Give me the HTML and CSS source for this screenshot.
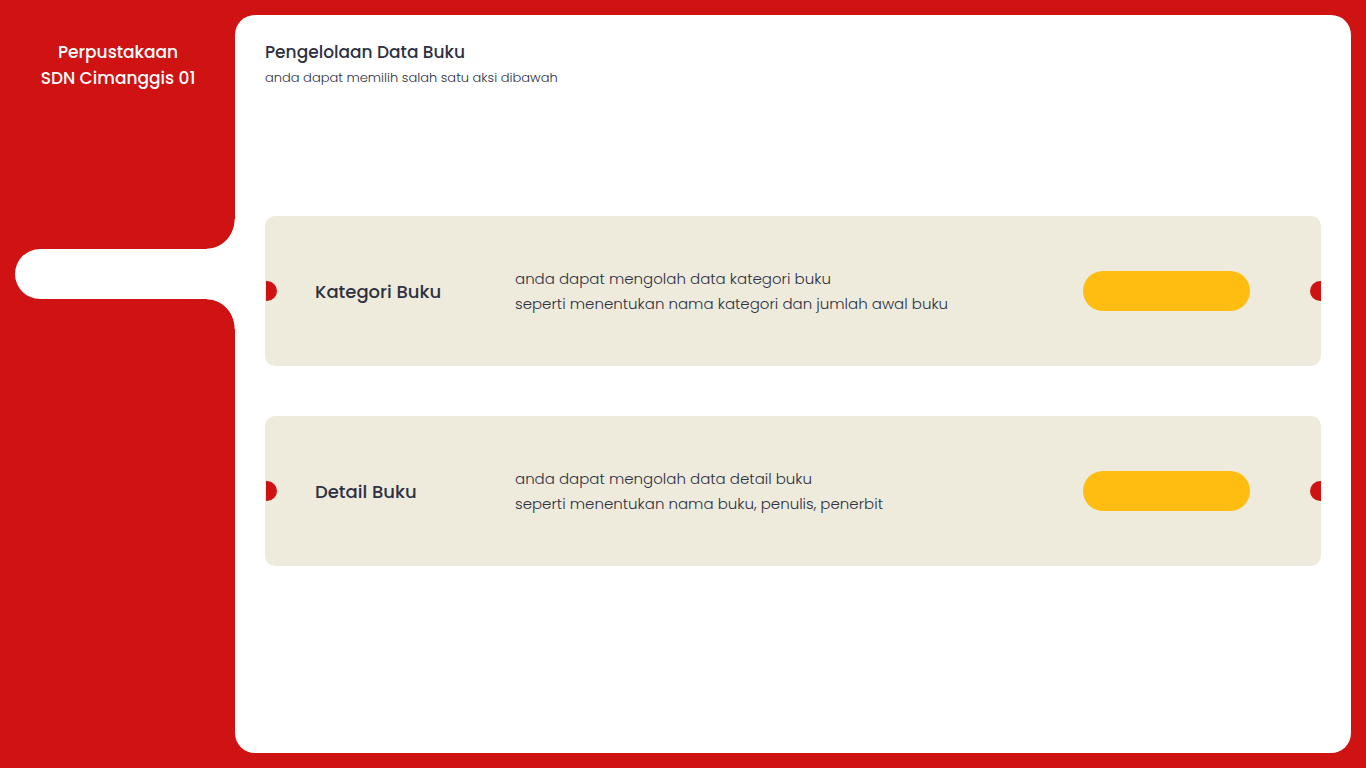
FILE: index.html
```html
<!DOCTYPE html>
<html lang="id">
<head>
<meta charset="utf-8">
<meta name="viewport" content="width=device-width, initial-scale=1">
<title>Perpustakaan SDN Cimanggis 01</title>
<link rel="stylesheet" href="styles.css">
</head>
<body>
<div class="layout">
  <aside class="sidebar">
    <p class="brand">Perpustakaan<br>SDN Cimanggis 01</p>
    <nav class="menu" aria-label="Menu">
      <a class="menu-item" href="#" aria-label="Buku" aria-current="page"></a>
    </nav>
  </aside>
  <main class="content">
    <header>
      <h1 class="title">Pengelolaan Data Buku</h1>
      <p class="subtitle">anda dapat memilih salah satu aksi dibawah</p>
    </header>
    <div class="cards">
      <section class="card">
        <h2 class="card-title">Kategori Buku</h2>
        <p class="card-text">anda dapat mengolah data kategori buku<br>seperti menentukan nama kategori dan jumlah awal buku</p>
        <button class="card-button" type="button" aria-label="Kategori Buku"></button>
      </section>
      <section class="card">
        <h2 class="card-title">Detail Buku</h2>
        <p class="card-text">anda dapat mengolah data detail buku<br>seperti menentukan nama buku, penulis, penerbit</p>
        <button class="card-button" type="button" aria-label="Detail Buku"></button>
      </section>
    </div>
  </main>
</div>
</body>
</html>
```
FILE: styles.css
```css
* {
  box-sizing: border-box;
  margin: 0;
  padding: 0;
}

body {
  background: #cf1212;
  color: #2d3142;
  font-family: Poppins, Inter, "Open Sans", sans-serif;
}

.layout {
  display: flex;
  min-height: 100vh;
  padding: 15px;
}

.sidebar {
  flex: 0 0 220px;
}

.brand {
  padding: 24px 14px 0 0;
  color: #fff;
  font-size: 17px;
  font-weight: 500;
  line-height: 26px;
  text-align: center;
}

.menu {
  padding-top: 158px;
}

.menu-item {
  position: relative;
  display: block;
  height: 50px;
  background: #fff;
  border-radius: 25px 0 0 25px;
}

.menu-item::before,
.menu-item::after {
  position: absolute;
  right: 0;
  width: 28px;
  height: 30px;
  content: "";
}

.menu-item::before {
  bottom: 100%;
  background: radial-gradient(28px 30px at 0 0, transparent 97%, #fff 100%);
}

.menu-item::after {
  top: 100%;
  background: radial-gradient(28px 30px at 0 100%, transparent 97%, #fff 100%);
}

.content {
  display: flex;
  flex: 1;
  flex-direction: column;
  padding: 24px 30px;
  background: #fff;
  border-radius: 20px;
}

.title {
  font-size: 17px;
  font-weight: 500;
  line-height: 26px;
}

.subtitle {
  font-size: 13px;
  font-weight: 300;
  line-height: 26px;
}

.cards {
  display: grid;
  gap: 50px;
  padding-top: 125px;
}

.card {
  position: relative;
  display: grid;
  grid-template-columns: 200px 1fr 167px;
  align-items: center;
  min-height: 150px;
  padding: 0 71px 0 50px;
  background: #eeebdc;
  border-radius: 10px;
}

.card::before,
.card::after {
  position: absolute;
  top: calc(50% - 10px);
  width: 11px;
  height: 20px;
  background: #cf1212;
  content: "";
}

.card::before {
  left: 1px;
  border-radius: 0 10px 10px 0;
}

.card::after {
  right: 0;
  border-radius: 10px 0 0 10px;
}

.card-title {
  font-size: 18px;
  font-weight: 500;
  line-height: 27px;
}

.card-text {
  font-size: 15px;
  font-weight: 300;
  line-height: 25px;
}

.card-button {
  height: 40px;
  background: #ffbd12;
  border: 0;
  border-radius: 20px;
}
```
